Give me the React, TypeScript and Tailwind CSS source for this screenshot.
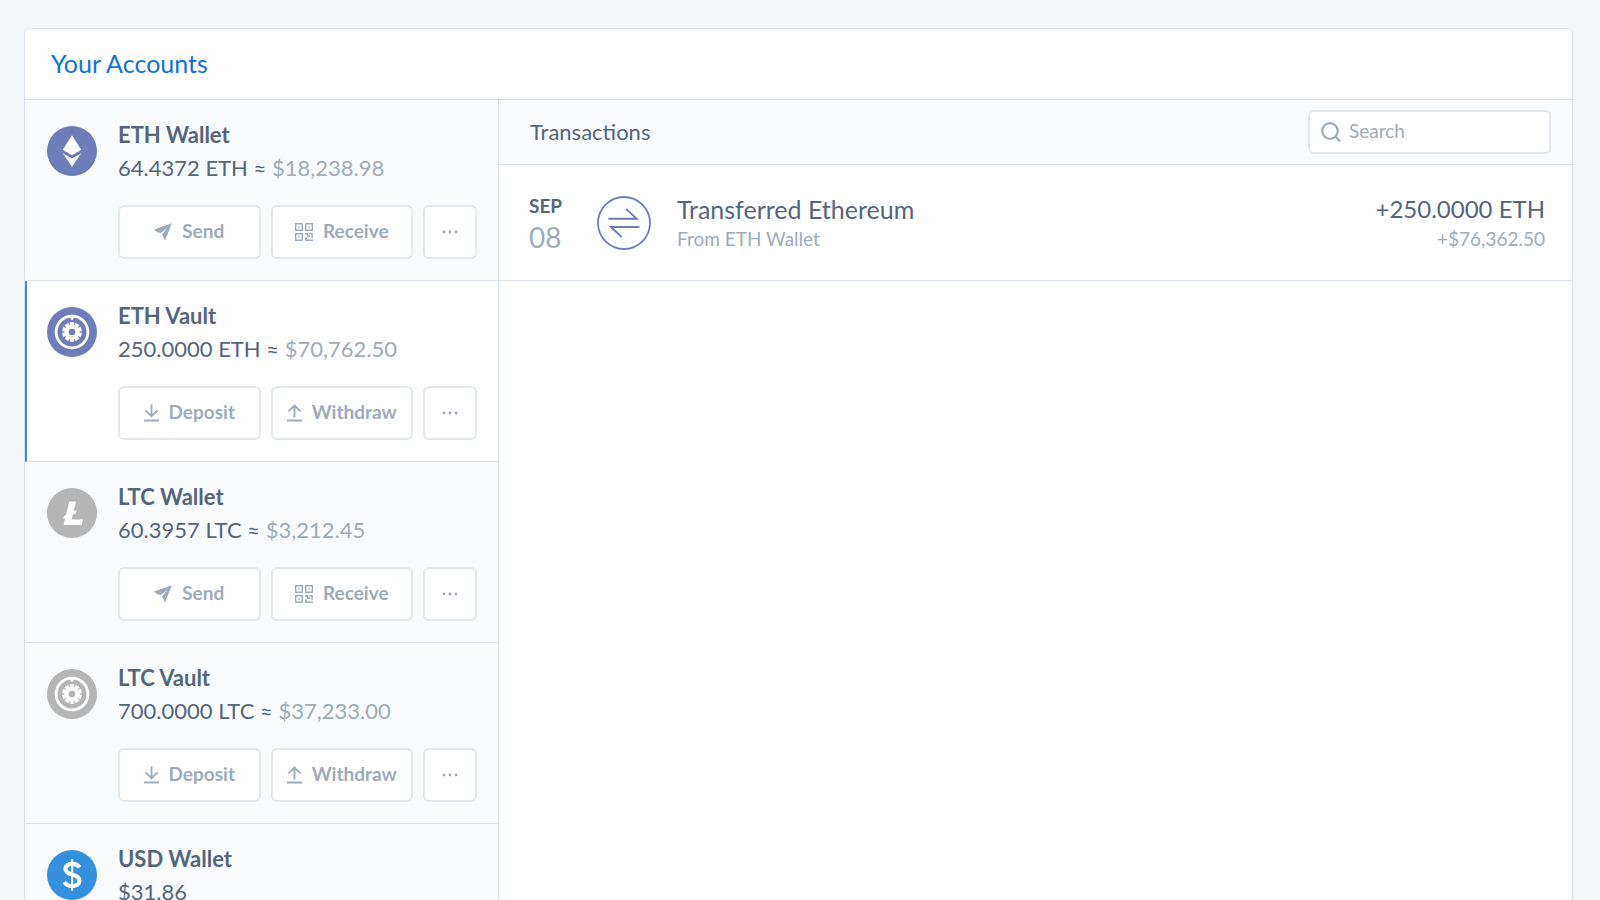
import type { ReactNode } from "react";
import clsx from "clsx";

type Kind = "eth" | "ltc" | "usd" | "eth-vault" | "ltc-vault";

type Account = {
  name: string;
  balance: string;
  fiat?: string;
  kind: Kind;
  actions: "wallet" | "vault" | null;
  active?: boolean;
};

const ACCOUNTS: Account[] = [
  { name: "ETH Wallet", balance: "64.4372 ETH", fiat: "$18,238.98", kind: "eth", actions: "wallet" },
  { name: "ETH Vault", balance: "250.0000 ETH", fiat: "$70,762.50", kind: "eth-vault", actions: "vault", active: true },
  { name: "LTC Wallet", balance: "60.3957 LTC", fiat: "$3,212.45", kind: "ltc", actions: "wallet" },
  { name: "LTC Vault", balance: "700.0000 LTC", fiat: "$37,233.00", kind: "ltc-vault", actions: "vault" },
  { name: "USD Wallet", balance: "$31.86", kind: "usd", actions: null },
];

const NOTCHES = [18, 54, 90, 126, 162, 198, 234, 270, 306, 342];

function VaultDial({ color }: { color: string }) {
  return (
    <>
      <circle cx="25" cy="25" r="25" fill={color} />
      <circle cx="25" cy="25" r="15.9" fill="none" stroke="#fff" strokeWidth="2.8" />
      <path d="M22.6 10h4.8L25 13.8z" fill="#fff" />
      <circle cx="25" cy="25" r="10" fill="#fff" />
      {NOTCHES.map((angle) => (
        <path key={angle} d="M25 14.5v2.8" stroke={color} strokeWidth="1.3" transform={`rotate(${angle} 25 25)`} />
      ))}
      <circle cx="25" cy="25" r="3.3" fill={color} />
    </>
  );
}

function AccountIcon({ kind }: { kind: Kind }) {
  return (
    <svg viewBox="0 0 50 50" className="size-[50px] shrink-0" aria-hidden="true">
      {kind === "eth" && (
        <>
          <circle cx="25" cy="25" r="25" fill="#6f7cba" />
          <path d="M25 9.3 34.3 23.8 25 29.2 15.7 23.8z" fill="#fff" />
          <path d="M15.7 27.3 25 32.6 34.3 27.3 25 40.7z" fill="#fff" />
        </>
      )}
      {kind === "eth-vault" && <VaultDial color="#6f7cba" />}
      {kind === "ltc-vault" && <VaultDial color="#b5b5b5" />}
      {kind === "ltc" && (
        <>
          <circle cx="25" cy="25" r="25" fill="#b5b5b5" />
          <path
            d="M22.3 13.6H29L26.6 23.4 29.7 22 28.9 25.2 25.7 26.7 24.5 31.6H36L34.7 37H16.6L18.1 30.2 16.2 31.1 17 27.9 19 27z"
            fill="#fff"
          />
        </>
      )}
      {kind === "usd" && (
        <>
          <circle cx="25" cy="25" r="25" fill="#3490dc" />
          <path
            d="M32.4 17.4C31 15 28.6 13.800 25.200 13.800c-4.200 0-6.700 2.100-6.700 5.200 0 3.400 2.900 4.500 6.700 5.600 4.200 1.200 7.200 2.400 7.200 6.100 0 3.400-3 5.400-7.200 5.400-3.600 0-6.400-1.500-8-4.100"
            fill="none"
            stroke="#fff"
            strokeWidth="4.200"
          />
          <path d="M25.200 9.200v31.600" stroke="#fff" strokeWidth="2" />
        </>
      )}
    </svg>
  );
}

function SendIcon() {
  return (
    <svg viewBox="0 0 18 18" className="size-[18px]" fill="currentColor" aria-hidden="true">
      <path d="M17.8.2 0 6.600 3.200 9.300 6.800 10 13.200 5 8.200 11.400 11 17.800z" />
    </svg>
  );
}

function QrIcon() {
  return (
    <svg viewBox="0 0 18 18" className="size-[18px]" fill="none" stroke="currentColor" strokeWidth="1.4" aria-hidden="true">
      <path d="M.7.7h6.600v6.600H.7zM10.700.7h6.600v6.600h-6.600zM.7 10.700h6.600v6.600H.7z" />
      <path d="M3.200 4h1.600M13.200 4h1.600M3.200 14h1.600" strokeWidth="1.600" />
      <path d="M10 10.700h2.400v2.600h2.800M14.300 10.700h3.500M17.100 10v5M10 15.300h2M10.700 14.600v2.700h7.300" />
    </svg>
  );
}

function DepositIcon() {
  return (
    <svg viewBox="0 0 15 18" className="h-[18px] w-[15px]" fill="none" stroke="currentColor" strokeWidth="1.900" aria-hidden="true">
      <path d="M7.500.2v12M1.400 6.400l6.100 5.900 6.100-5.900M0 16.500h15" />
    </svg>
  );
}

function WithdrawIcon() {
  return (
    <svg viewBox="0 0 15 18" className="h-[18px] w-[15px]" fill="none" stroke="currentColor" strokeWidth="1.900" aria-hidden="true">
      <path d="M7.500 13.500V1.500M1.400 7.400l6.100-5.900 6.100 5.900M0 16.500h15" />
    </svg>
  );
}

function ActionButton({ icon, children }: { icon: ReactNode; children: ReactNode }) {
  return (
    <button
      type="button"
      className="flex h-[54px] flex-1 items-center justify-center gap-[10px] rounded-md border-2 border-[#e3e9ef] bg-white pb-px text-[19px] font-bold text-[#9eabb9]"
    >
      {icon}
      {children}
    </button>
  );
}

function AccountRow({ account }: { account: Account }) {
  return (
    <li
      className={clsx(
        "flex gap-[21px] border-b border-b-[#dae1e9] border-l-2 pt-[26px] pr-[21px] pb-[21px] pl-5",
        account.active ? "border-l-[#3490dc] bg-white" : "border-l-transparent bg-[#f9fbfd]",
      )}
    >
      <AccountIcon kind={account.kind} />
      <div className="min-w-0 flex-1">
        <h2 className="text-[22px] leading-[18px] font-bold text-[#55657a]">{account.name}</h2>
        <p className="mt-[15px] text-[22px] leading-[18px] text-[#55657a]">
          {account.balance}
          {account.fiat && (
            <>
              {" ≈ "}
              <span className="text-[#9eabb9]">{account.fiat}</span>
            </>
          )}
        </p>
        {account.actions && (
          <div className="mt-7 flex gap-[10px]">
            {account.actions === "wallet" ? (
              <>
                <ActionButton icon={<SendIcon />}>Send</ActionButton>
                <ActionButton icon={<QrIcon />}>Receive</ActionButton>
              </>
            ) : (
              <>
                <ActionButton icon={<DepositIcon />}>Deposit</ActionButton>
                <ActionButton icon={<WithdrawIcon />}>Withdraw</ActionButton>
              </>
            )}
            <button
              type="button"
              aria-label={`More actions for ${account.name}`}
              className="flex h-[54px] w-[54px] items-center justify-center rounded-md border-2 border-[#e3e9ef] bg-white text-[#9eabb9]"
            >
              <svg viewBox="0 0 16 4" className="h-1 w-4" fill="currentColor" aria-hidden="true">
                <circle cx="2" cy="2" r="1.400" />
                <circle cx="8" cy="2" r="1.400" />
                <circle cx="14" cy="2" r="1.400" />
              </svg>
            </button>
          </div>
        )}
      </div>
    </li>
  );
}

function Transaction() {
  return (
    <article className="flex items-center border-b border-[#dae1e9] pt-[30px] pr-[27px] pb-[29px] pl-[30px]">
      <div className="flex h-[54px] w-[68px] flex-col justify-between">
        <span className="text-[19px] leading-5 font-bold text-[#55657a]">SEP</span>
        <span className="text-[28px] leading-[26px] text-[#9eabb9]">08</span>
      </div>
      <svg viewBox="0 0 54 54" className="size-[54px] shrink-0" fill="none" stroke="#6f7cba" aria-hidden="true">
        <circle cx="27" cy="27" r="26" strokeWidth="1.800" />
        <path d="M11.300 22.800h28.400L29 12.900M42.500 31H14l10.700 10" strokeWidth="1.900" />
      </svg>
      <div className="ml-[26px] flex-1">
        <h3 className="text-[25px] leading-7 text-[#55657a]">Transferred Ethereum</h3>
        <p className="mt-1 text-[19px] leading-6 text-[#9eabb9]">From ETH Wallet</p>
      </div>
      <div className="text-right">
        <p className="text-2xl leading-7 text-[#55657a]">+250.0000 ETH</p>
        <p className="mt-1 text-[19px] leading-6 text-[#9eabb9]">+$76,362.50</p>
      </div>
    </article>
  );
}

export default function App() {
  return (
    <div className="h-screen overflow-hidden bg-[#f3f7fa] pt-7 pr-[27px] pl-6 font-['Lato','Open_Sans',sans-serif]">
      <main className="rounded-md border border-[#dae1e9] bg-white">
        <header className="border-b border-[#dae1e9] px-[26px] pt-[19px] pb-[21px]">
          <h1 className="text-[25px] leading-[30px] text-[#1173d4]">Your Accounts</h1>
        </header>
        <div className="flex">
          <ul className="w-[474px] shrink-0 border-r border-[#dae1e9]">
            {ACCOUNTS.map((account) => (
              <AccountRow key={account.name} account={account} />
            ))}
          </ul>
          <section className="min-w-0 flex-1">
            <div className="flex items-center justify-between border-b border-[#dae1e9] bg-[#f9fbfd] py-[10px] pr-[21px] pl-[31px]">
              <h2 className="text-[22px] leading-7 text-[#55657a]">Transactions</h2>
              <label className="flex h-11 w-[243px] items-center gap-2 rounded-md border-2 border-[#e3e9ef] bg-white px-[11px] text-[#9eabb9]">
                <svg viewBox="0 0 20 20" className="size-5 shrink-0" fill="none" stroke="currentColor" strokeWidth="2.200" aria-hidden="true">
                  <circle cx="9" cy="9" r="7.800" />
                  <path d="M14.400 14.400l4.800 4.800" />
                </svg>
                <input
                  type="search"
                  aria-label="Search transactions"
                  placeholder="Search"
                  className="w-full min-w-0 bg-transparent pb-px text-[19px] outline-none placeholder:text-[#9eabb9]"
                />
              </label>
            </div>
            <Transaction />
          </section>
        </div>
      </main>
    </div>
  );
}
